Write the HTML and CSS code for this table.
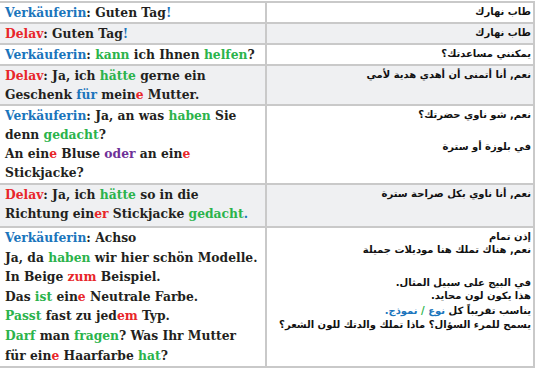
FILE: index.html
```html
<!DOCTYPE html>
<html lang="de">
<head>
<meta charset="utf-8">
<title>Dialog</title>
<link rel="stylesheet" href="styles.css">
</head>
<body>
<table class="dlg">
  <colgroup><col class="c-de"><col class="c-ar"></colgroup>
  <tr class="r1">
    <td class="de"><span class="bl">Verkäuferin</span>: Guten Tag<span class="bl">!</span></td>
    <td class="ar" dir="rtl" lang="ar"><div>طاب نهارك</div></td>
  </tr>
  <tr class="r2 alt">
    <td class="de"><span class="rd">Delav</span>: Guten Tag<span class="bl">!</span></td>
    <td class="ar" dir="rtl" lang="ar"><div>طاب نهارك</div></td>
  </tr>
  <tr class="r3">
    <td class="de"><span class="bl">Verkäuferin</span>: <span class="gr">kann</span> ich Ihnen <span class="gr">helfen</span>?</td>
    <td class="ar" dir="rtl" lang="ar"><div>يمكنني مساعدتك؟</div></td>
  </tr>
  <tr class="r4 alt">
    <td class="de"><span class="rd">Delav</span>: Ja, ich <span class="gr">hätte</span> gerne ein<br>Geschenk <span class="bl">für</span> mein<span class="rd">e</span> Mutter.</td>
    <td class="ar" dir="rtl" lang="ar"><div>نعم, أنا أتمنى أن أهدي هدية لأمي</div></td>
  </tr>
  <tr class="r5">
    <td class="de pb1"><span class="bl">Verkäuferin</span>: Ja, an was <span class="gr">haben</span> Sie<br>denn <span class="gr">gedacht</span>?<br>An ein<span class="rd">e</span> Bluse <span class="pu">oder</span> an ein<span class="rd">e</span><br>Stickjacke?</td>
    <td class="ar" dir="rtl" lang="ar"><div>نعم, شو ناوي حضرتك؟</div><div class="gap2">في بلوزة أو سترة</div></td>
  </tr>
  <tr class="r6 alt">
    <td class="de pb3"><span class="rd">Delav</span>: Ja, ich <span class="gr">hätte</span> so in die<br>Richtung ein<span class="rd">er</span> Stickjacke <span class="gr">gedacht</span><span class="bl">.</span></td>
    <td class="ar" dir="rtl" lang="ar"><div>نعم, أنا ناوي بكل صراحة سترة</div></td>
  </tr>
  <tr class="r7">
    <td class="de long"><span class="bl">Verkäuferin</span>: Achso<br>Ja, da <span class="gr">haben</span> wir hier schön Modelle.<br>In Beige <span class="rd">zum</span> Beispiel.<br>Das <span class="gr">ist</span> ein<span class="rd">e</span> Neutrale Farbe.<br><span class="gr">Passt</span> fast zu jed<span class="rd">em</span> Typ.<br><span class="gr">Darf</span> man <span class="gr">fragen</span>? Was Ihr Mutter<br>für ein<span class="rd">e</span> Haarfarbe <span class="gr">hat</span>?</td>
    <td class="ar" dir="rtl" lang="ar">
      <div>إذن تمام</div>
      <div>نعم, هناك تملك هنا موديلات جميلة</div>
      <div class="gap3">في البيج على سبيل المثال.</div>
      <div class="l14">هذا يكون لون محايد.</div>
      <div class="l15">يناسب تقريباً كل <span class="bl">نوع</span> <span class="gr">/</span> <span class="bl">نموذج.</span></div>
      <div class="l14">يسمح للمرء السؤال؟ ماذا تملك والدتك للون الشعر؟</div>
    </td>
  </tr>
</table>
</body>
</html>
```

FILE: styles.css
```css
html, body {
  margin: 0;
  padding: 0;
  background: #ffffff;
}

.dlg {
  border-collapse: collapse;
  table-layout: fixed;
  width: 536px;
  margin: 1px 0 0 -3px;
}

.c-de { width: 268px; }
.c-ar { width: 268px; }

.dlg td {
  border: 2px solid #c9c9c9;
  vertical-align: top;
  white-space: nowrap;
  overflow: hidden;
}

.alt td { background: #eff0f2; }

.de {
  font-family: "DejaVu Serif", serif;
  font-weight: bold;
  font-size: 12.3px;
  line-height: 19px;
  color: #231f20;
  padding: 0 0 0 6px;
}

.de.long { line-height: 19.6px; padding-bottom: 1px; }

.pb1 { padding-bottom: 1px; }
.pb3 { padding-bottom: 3px; }

.ar {
  font-family: "DejaVu Sans", sans-serif;
  font-weight: bold;
  font-size: 10px;
  line-height: 13px;
  color: #111111;
  text-align: right;
  padding: 2px 2px 0 0;
}

.gap2 { margin-top: 19px; }
.gap3 { margin-top: 20px; }
.l14 { line-height: 14px; }
.l15 { line-height: 15px; }

.bl { color: #1b75bc; }
.rd { color: #e8262a; }
.gr { color: #2bb34b; }
.pu { color: #6f3198; }
```
